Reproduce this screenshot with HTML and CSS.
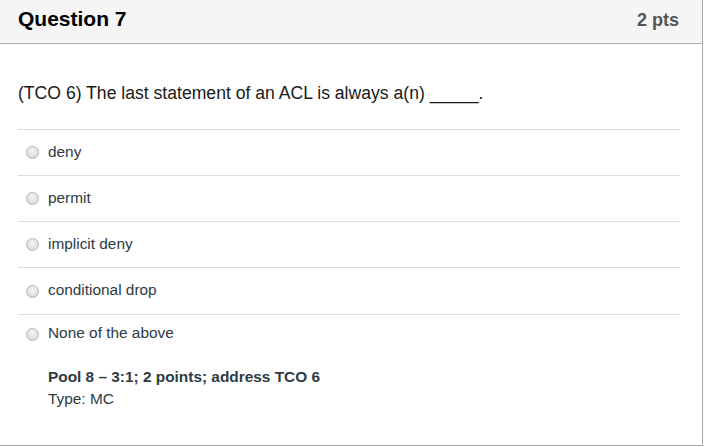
FILE: index.html
```html
<!DOCTYPE html>
<html>
<head>
<meta charset="utf-8">
<link rel="stylesheet" href="styles.css">
</head>
<body>
<div class="quiz">
  <div class="header">
    <div class="title">Question 7</div>
    <div class="pts">2 pts</div>
  </div>
  <div class="content">
    <div class="question">(TCO 6) The last statement of an ACL is always a(n) _____.</div>
    <div class="answers">
      <div class="answer"><span class="radio"></span><span class="label">deny</span></div>
      <div class="answer"><span class="radio"></span><span class="label">permit</span></div>
      <div class="answer"><span class="radio"></span><span class="label">implicit deny</span></div>
      <div class="answer tall"><span class="radio"></span><span class="label">conditional drop</span></div>
      <div class="answer last"><span class="radio"></span><span class="label">None of the above</span></div>
    </div>
    <div class="notes">
      <div class="pool">Pool 8 – 3:1; 2 points; address TCO 6</div>
      <div class="type">Type: MC</div>
    </div>
  </div>
</div>
</body>
</html>
```
FILE: styles.css
```css
html, body {
  margin: 0;
  padding: 0;
  background: #fff;
}
.quiz {
  width: 702px;
  height: 445px;
  border-right: 1px solid #aaa;
  border-bottom: 1px solid #aaa;
  font-family: "Liberation Sans", Arial, sans-serif;
  display: flex;
  flex-direction: column;
}
.header {
  height: 44px;
  box-sizing: border-box;
  background: #f5f5f5;
  border-bottom: 1px solid #aaa;
  display: flex;
  justify-content: space-between;
  align-items: baseline;
  padding: 7px 23px 0 18px;
}
.title {
  font-size: 21px;
  line-height: 24px;
  font-weight: bold;
  color: #000;
}
.pts {
  font-size: 18px;
  line-height: 24px;
  font-weight: bold;
  color: #555;
}
.content {
  padding: 0 22px 0 18px;
}
.question {
  font-size: 17.6px;
  line-height: 22px;
  color: #1a1a1a;
  padding-top: 38px;
  padding-bottom: 25px;
}
.answer {
  border-top: 1px solid #ddd;
  height: 45px;
  box-sizing: content-box;
  display: flex;
  align-items: center;
  padding-left: 8px;
}
.answer .label {
  line-height: 18px;
  margin-top: -2px;
}
.answer.tall {
  height: 46px;
}
.answer.last {
  height: 37px;
}
.answer.last .radio {
  margin-top: 2px;
}
.radio {
  width: 11px;
  height: 11px;
  border-radius: 50%;
  border: 1px solid #b4b4b4;
  background: radial-gradient(circle at 50% 35%, #f4f4f4 0%, #e2e2e2 55%, #cfcfcf 100%);
  flex: none;
  margin-right: 9px;
}
.label {
  font-size: 15.4px;
  color: #2d3b45;
}
.notes {
  padding-left: 30px;
  padding-top: 14px;
  font-size: 15.4px;
  line-height: 22px;
  color: #2d3b45;
}
.pool {
  font-weight: bold;
}
```
